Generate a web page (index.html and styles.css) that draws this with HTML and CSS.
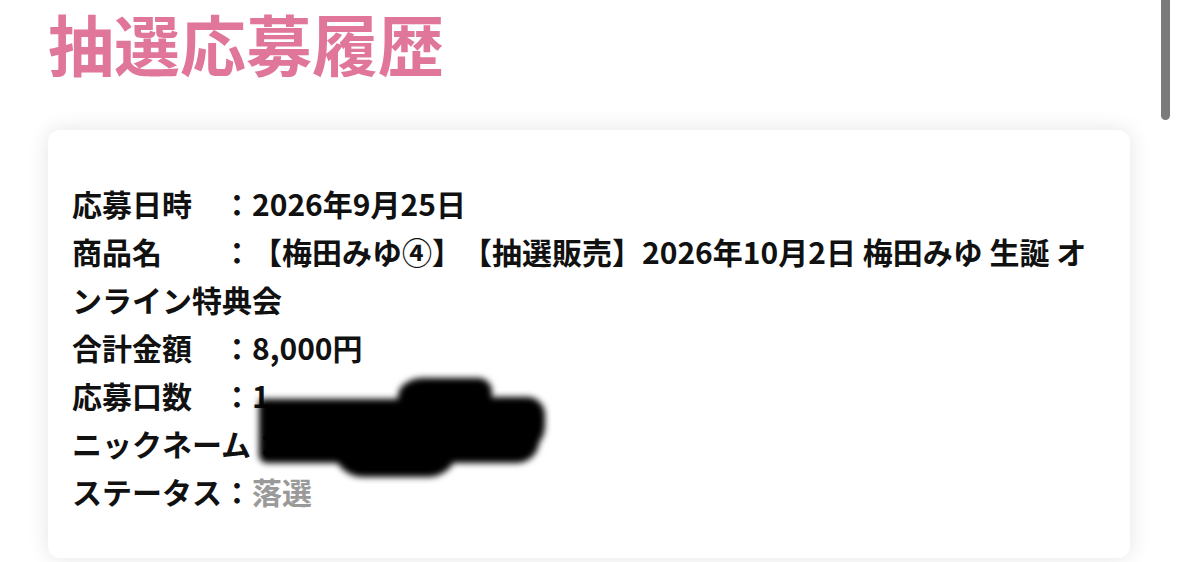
FILE: index.html
```html
<!DOCTYPE html>
<html lang="ja">
<head>
<meta charset="utf-8">
<title>抽選応募履歴</title>
<link rel="stylesheet" href="styles.css">
</head>
<body>
<div class="page">
  <h1 class="title">抽選応募履歴</h1>
  <div class="card">
    <p class="row">応募日時　：2026年9月25日</p>
    <p class="row">商品名　　：【梅田みゆ④】【抽選販売】2026年10月2日 梅田みゆ 生誕 オンライン特典会</p>
    <p class="row">合計金額　：8,000円</p>
    <p class="row">応募口数　：1</p>
    <p class="row">ニックネーム：</p>
    <p class="row">ステータス：<span class="muted">落選</span></p>
    <div class="redact">
      <span class="blob b1"></span>
      <span class="blob b2"></span>
      <span class="blob b3"></span>
      <span class="blob b4"></span>
    </div>
  </div>
</div>
<div class="scrollbar"></div>
</body>
</html>
```
FILE: styles.css
```css
html, body {
  margin: 0;
  padding: 0;
  background: #ffffff;
  overflow: hidden;
  height: 562px;
}
body {
  font-family: "Noto Sans CJK JP", "Noto Sans", sans-serif;
  color: #111111;
  text-spacing-trim: space-all;
}
.page {
  padding: 0 49px 0 48px;
}
.title {
  margin: 9px 0 0 0;
  font-size: 66px;
  line-height: 1;
  font-weight: 700;
  color: #e0769a;
}
.card {
  position: relative;
  margin-top: 55px;
  background: #ffffff;
  border-radius: 12px;
  box-shadow: 0 0 22px rgba(0, 0, 0, 0.11);
  padding: 49px 24px 43px 24px;
}
.row {
  margin: 0;
  font-size: 30px;
  line-height: 48px;
  font-weight: 700;
}
.muted {
  color: #9a9a9a;
}
.redact {
  position: absolute;
  left: 0;
  top: 0;
  width: 0;
  height: 0;
  filter: blur(3px);
}
.blob {
  position: absolute;
  display: block;
  background: #000;
}
.b1 {
  left: 211px;
  top: 269px;
  width: 280px;
  height: 64px;
  border-radius: 4px 14px 22px 8px;
}
.b2 {
  left: 350px;
  top: 248px;
  width: 94px;
  height: 44px;
  border-radius: 26px 14px 4px 4px / 18px 14px 4px 4px;
}
.b3 {
  left: 440px;
  top: 267px;
  width: 57px;
  height: 58px;
  border-radius: 8px 18px 30px 10px;
}
.b4 {
  left: 285px;
  top: 305px;
  width: 125px;
  height: 42px;
  border-radius: 10px 10px 30px 30px;
}
.scrollbar {
  position: absolute;
  left: 1161px;
  top: 0;
  width: 9px;
  height: 120px;
  background: #7b7b7b;
  border-radius: 0 0 5px 5px;
}
```
